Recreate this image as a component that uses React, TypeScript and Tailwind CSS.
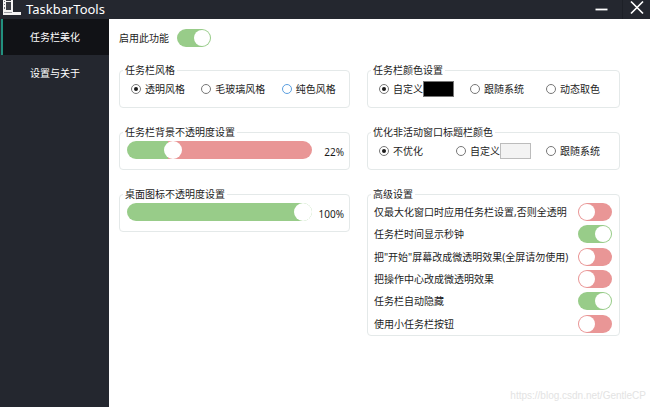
import React, { useState } from 'react';

interface SwitchProps {
  id: string;
  checked: boolean;
  onChange: (checked: boolean) => void;
}

const Switch: React.FC<SwitchProps> = ({ id, checked, onChange }) => (
  <input
    id={id}
    type="checkbox"
    role="switch"
    checked={checked}
    onChange={e => onChange(e.target.checked)}
    className="flex h-[18px] w-[34px] shrink-0 cursor-pointer appearance-none items-center justify-start rounded-full bg-[#e99696] px-px before:size-4 before:rounded-full before:bg-white before:content-[''] checked:justify-end checked:bg-[#98cc89]"
  />
);

interface GroupProps {
  title: string;
  children: React.ReactNode;
}

const Group: React.FC<GroupProps> = ({ title, children }) => (
  <fieldset className="min-w-0 rounded-sm border border-[#e4e9e9]">
    <legend className="ml-[3px] px-[2px] leading-[14px]">{title}</legend>
    {children}
  </fieldset>
);

interface Option {
  label: string;
  swatch?: string;
  accent?: boolean;
}

interface RadioRowProps {
  name: string;
  options: Option[];
  columns: string;
}

const RadioRow: React.FC<RadioRowProps> = ({ name, options, columns }) => {
  const [selected, setSelected] = useState(0);

  return (
    <div className={`grid h-[30px] items-start pt-1 pr-1 pl-[11px] ${columns}`}>
      {options.map((option, index) => (
        <div key={option.label} className="flex h-4 items-center whitespace-nowrap">
          <label className="flex items-center gap-1">
            <input
              type="radio"
              name={name}
              checked={selected === index}
              onChange={() => setSelected(index)}
              className={`flex size-[10px] shrink-0 appearance-none items-center justify-center rounded-full border bg-white checked:before:size-1 checked:before:rounded-full checked:before:bg-[#1c1c1c] checked:before:content-[''] ${option.accent ? 'border-[#5b9fe0]' : 'border-[#777777]'}`}
            />
            {option.label}
          </label>
          {option.swatch && (
            <button
              type="button"
              aria-label="选择颜色"
              className={`h-4 w-[31px] shrink-0 border ${option.swatch}`}
            />
          )}
        </div>
      ))}
    </div>
  );
};

interface OpacitySliderProps {
  label: string;
  initial: number;
}

const OpacitySlider: React.FC<OpacitySliderProps> = ({ label, initial }) => {
  const [value, setValue] = useState(initial);

  return (
    <div className="flex h-[30px] items-start pt-[2px] pr-[5px] pl-[7px]">
      <input
        type="range"
        min={0}
        max={100}
        value={value}
        aria-label={label}
        onChange={e => setValue(Number(e.target.value))}
        style={{ background: `linear-gradient(to right, #98cc89 ${value}%, #e99696 ${value}%)` }}
        className="h-[18px] min-w-0 flex-1 cursor-pointer appearance-none rounded-full [&::-webkit-slider-thumb]:size-[18px] [&::-webkit-slider-thumb]:appearance-none [&::-webkit-slider-thumb]:rounded-full [&::-webkit-slider-thumb]:bg-white"
      />
      <output className="w-8 pt-1 text-right leading-[14px]">{value}%</output>
    </div>
  );
};

const ADVANCED = [
  { id: 'maximized', label: '仅最大化窗口时应用任务栏设置,否则全透明', on: false },
  { id: 'seconds', label: '任务栏时间显示秒钟', on: true },
  { id: 'start', label: '把"开始"屏幕改成微透明效果(全屏请勿使用)', on: false },
  { id: 'action-center', label: '把操作中心改成微透明效果', on: false },
  { id: 'auto-hide', label: '任务栏自动隐藏', on: true },
  { id: 'small-buttons', label: '使用小任务栏按钮', on: false }
];

const AdvancedSettings: React.FC = () => {
  const [states, setStates] = useState<Record<string, boolean>>(
    Object.fromEntries(ADVANCED.map(item => [item.id, item.on]))
  );

  return (
    <div className="grid min-h-[134px] grid-rows-6 pr-[7px] pl-[6px]">
      {ADVANCED.map(item => (
        <div key={item.id} className="flex items-center justify-between whitespace-nowrap">
          <label htmlFor={item.id}>{item.label}</label>
          <Switch
            id={item.id}
            checked={states[item.id]}
            onChange={checked => setStates(prev => ({ ...prev, [item.id]: checked }))}
          />
        </div>
      ))}
    </div>
  );
};

const TitleBar: React.FC = () => (
  <header className="flex h-[19px] items-start justify-between bg-[#24272f] text-white">
    <div className="flex items-start gap-1 pl-[3px]">
      <svg width="19" height="16" viewBox="0 0 19 16" aria-hidden="true">
        <path d="M0 0h10v12h8v3H0z" fill="#f4f4f4" />
        <path d="M3 0h5v1H3zM3 2h5v8H3z" fill="#3b3e45" />
        <path d="M1 1h1v1H1zM1 4h1v1H1zM1 7h1v2H1z" fill="#6b6e75" />
        <path d="M1 12h8v1H1z" fill="#9a9ca2" />
      </svg>
      <h1 className="text-[13px] leading-[18px]">TaskbarTools</h1>
    </div>
    <div className="flex">
      <button type="button" aria-label="最小化" className="flex h-[19px] w-[42px] justify-center">
        <svg width="13" height="16" viewBox="0 0 13 16">
          <path d="M0.5 9.5h12" stroke="currentColor" strokeWidth="1.8" />
        </svg>
      </button>
      <button type="button" aria-label="关闭" className="flex h-[19px] w-7 justify-center border-l border-[#1d2027]">
        <svg width="14" height="16" viewBox="0 0 14 16">
          <path d="M1 1.5l12 12M13 1.5l-12 12" stroke="currentColor" strokeWidth="1.7" />
        </svg>
      </button>
    </div>
  </header>
);

const Sidebar: React.FC = () => (
  <nav className="w-[109px] shrink-0 bg-[#24272f] text-white">
    <a
      href="#beautify"
      aria-current="page"
      className="ml-px flex h-9 items-center border-l-2 border-[#22907e] bg-[#111216] pl-[27px]"
    >
      任务栏美化
    </a>
    <a href="#about" className="ml-px flex h-[35px] items-center pl-[29px]">
      设置与关于
    </a>
  </nav>
);

export default function App() {
  const [enabled, setEnabled] = useState(true);

  return (
    <div className="relative flex min-h-screen flex-col bg-white font-['Noto_Sans','Noto_Sans_CJK_SC',sans-serif] text-[10px] leading-[14px] text-[#1c1c1c]">
      <TitleBar />
      <div className="flex flex-1">
        <Sidebar />
        <main className="min-w-0 flex-1 pt-[10px] pr-[30px] pl-[10px]">
          <div className="flex items-center gap-2">
            <label htmlFor="enabled">启用此功能</label>
            <Switch id="enabled" checked={enabled} onChange={setEnabled} />
          </div>

          <div className="mt-4 grid grid-cols-[231fr_253fr] gap-[17px]">
            <div className="flex flex-col gap-[17px]">
              <Group title="任务栏风格">
                <RadioRow
                  name="style"
                  columns="grid-cols-[70fr_80fr_63fr]"
                  options={[{ label: '透明风格' }, { label: '毛玻璃风格' }, { label: '纯色风格', accent: true }]}
                />
              </Group>
              <Group title="任务栏背景不透明度设置">
                <OpacitySlider label="任务栏背景不透明度设置" initial={22} />
              </Group>
              <Group title="桌面图标不透明度设置">
                <OpacitySlider label="桌面图标不透明度设置" initial={100} />
              </Group>
            </div>

            <div className="flex flex-col gap-[17px]">
              <Group title="任务栏颜色设置">
                <RadioRow
                  name="taskbar-color"
                  columns="grid-cols-[91fr_76fr_69fr]"
                  options={[
                    { label: '自定义', swatch: 'border-[#777777] bg-black' },
                    { label: '跟随系统' },
                    { label: '动态取色' }
                  ]}
                />
              </Group>
              <Group title="优化非活动窗口标题栏颜色">
                <RadioRow
                  name="title-color"
                  columns="grid-cols-[77fr_90fr_69fr]"
                  options={[
                    { label: '不优化' },
                    { label: '自定义', swatch: 'border-[#bcbcbc] bg-[#f3f3f3]' },
                    { label: '跟随系统' }
                  ]}
                />
              </Group>
              <Group title="高级设置">
                <AdvancedSettings />
              </Group>
            </div>
          </div>
        </main>
      </div>
      <span className="absolute right-1 bottom-1 font-['Liberation_Sans',sans-serif] text-[#e3e3e3]">
        https://blog.csdn.net/GentleCP
      </span>
    </div>
  );
}
